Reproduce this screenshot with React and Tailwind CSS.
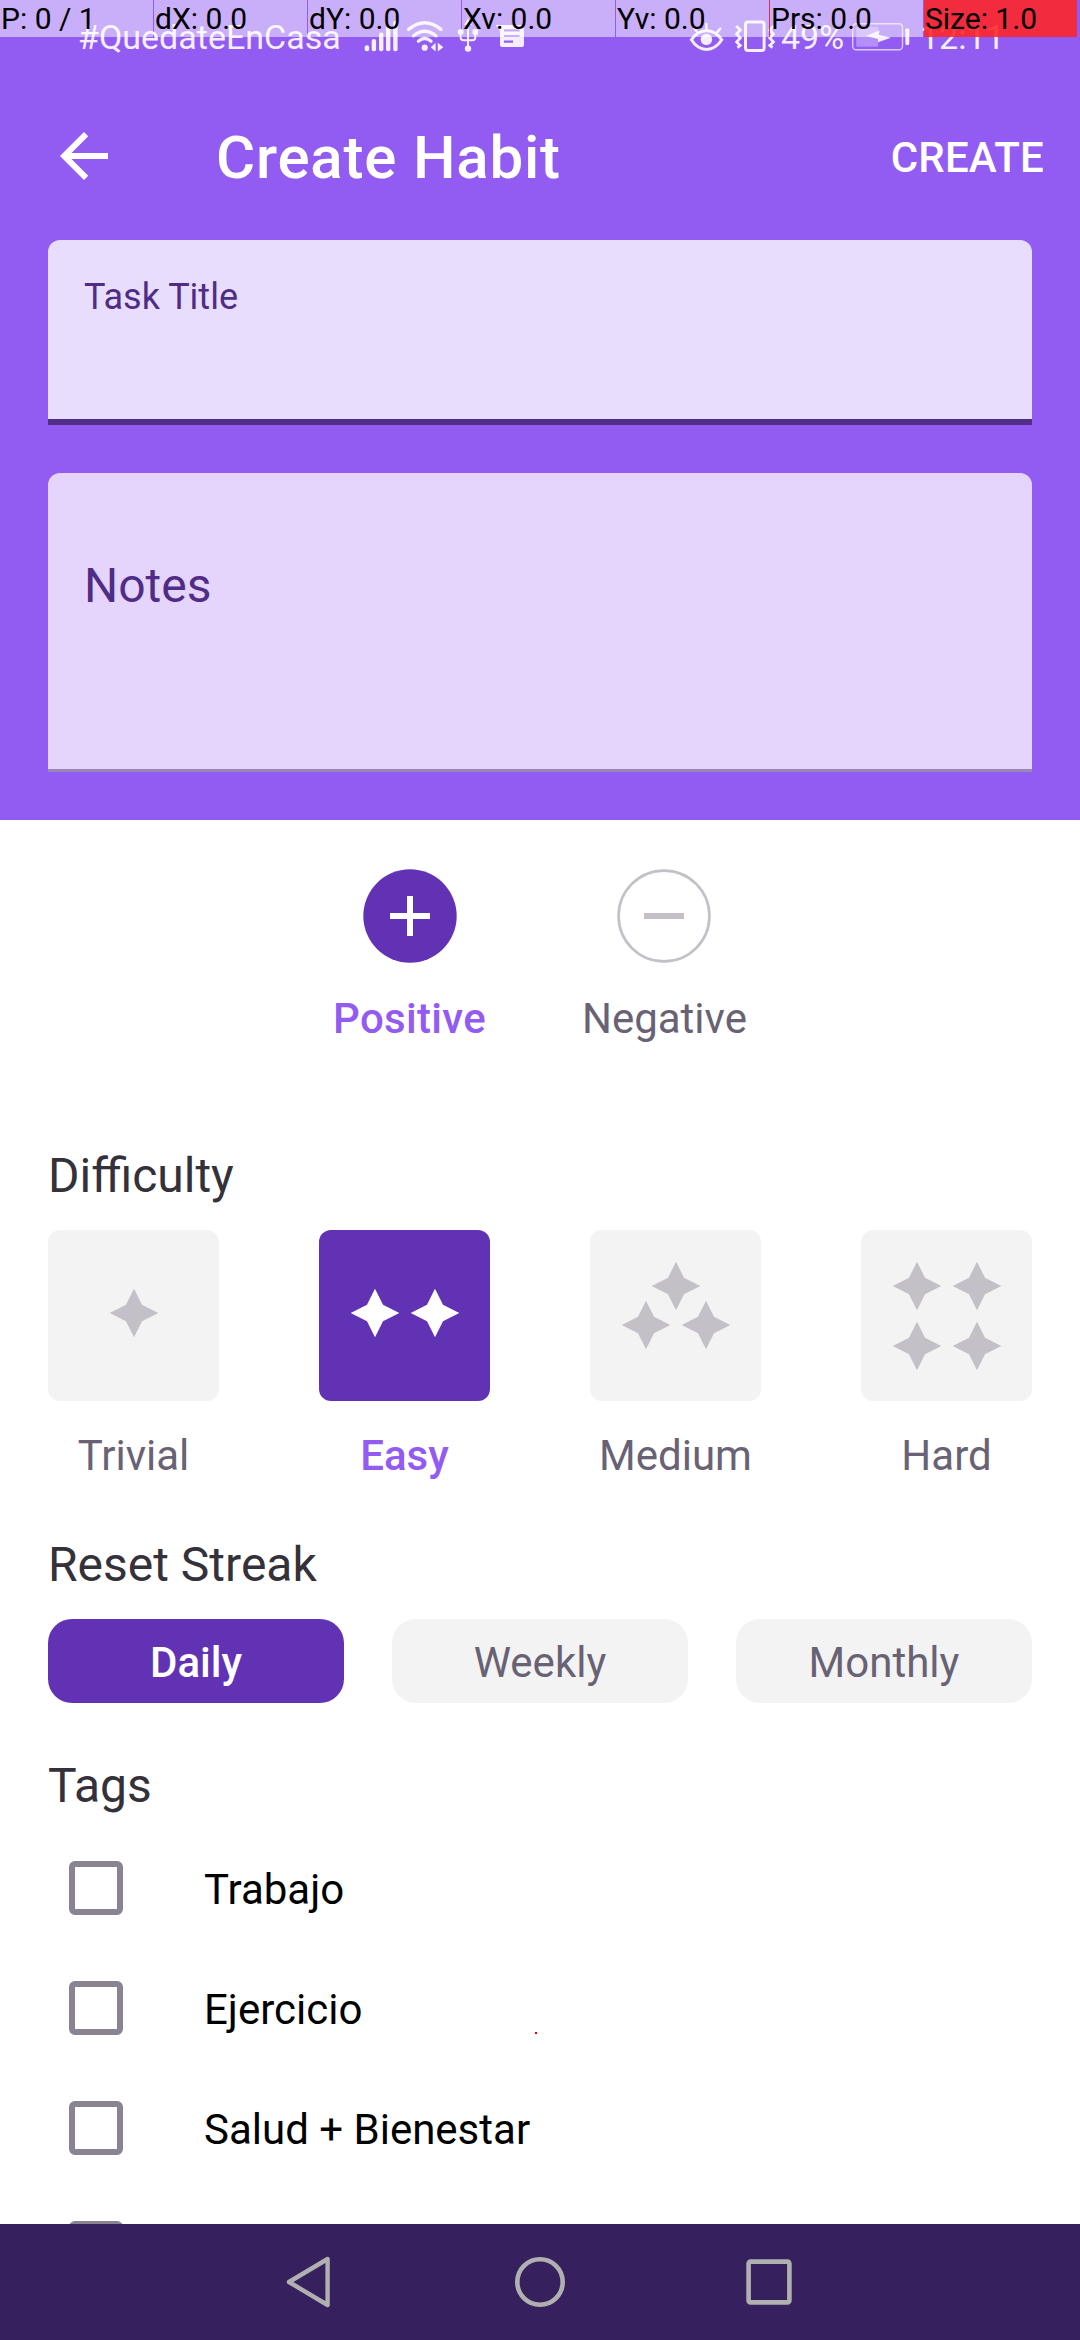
import { MdArrowBack } from "react-icons/md";

const DEBUG_CELLS = [
  { text: "P: 0 / 1", style: "bg-white/50" },
  { text: "dX: 0.0", style: "bg-white/50" },
  { text: "dY: 0.0", style: "bg-white/50" },
  { text: "Xv: 0.0", style: "bg-white/50" },
  { text: "Yv: 0.0", style: "bg-white/50" },
  { text: "Prs: 0.0", style: "bg-white/50 shadow-[-1px_0_0_#d8305a]" },
  { text: "Size: 1.0", style: "bg-[rgba(255,36,36,0.88)]" },
];

const DIFFICULTIES = [
  { label: "Trivial", stars: [[86, 83]] },
  { label: "Easy", stars: [[56, 83], [116, 83]], selected: true },
  { label: "Medium", stars: [[86, 56], [56, 95], [116, 95]] },
  { label: "Hard", stars: [[56, 56], [116, 56], [56, 116], [116, 116]] },
];

const STREAKS = [
  { label: "Daily", selected: true },
  { label: "Weekly" },
  { label: "Monthly" },
];

const TAGS = ["Trabajo", "Ejercicio", "Salud + Bienestar", ""];

function PointerDebugBar() {
  return (
    <div className="absolute inset-x-0 top-0 flex h-[37px] gap-px text-[30px] leading-[37px] text-black">
      {DEBUG_CELLS.map((c) => (
        <div key={c.text} className={`w-[153px] shrink-0 whitespace-nowrap pl-px ${c.style}`}>
          {c.text}
        </div>
      ))}
    </div>
  );
}

function SignalIcon() {
  return (
    <svg className="h-[60px] w-9 shrink-0" viewBox="364 8 36 60" fill="currentColor">
      <rect x="364.7" y="45.3" width="4.4" height="6" rx="2" />
      <rect x="371.7" y="39" width="4.4" height="12.3" rx="2" />
      <rect x="379" y="32.4" width="4.4" height="18.9" rx="2" />
      <rect x="386" y="26.4" width="4.4" height="24.9" rx="2" />
      <rect x="393.2" y="20.7" width="4.4" height="30.6" rx="2" />
    </svg>
  );
}

function WifiIcon() {
  return (
    <svg className="ml-1.5 h-[60px] w-10 shrink-0" viewBox="406 8 40 60" fill="none" stroke="currentColor" strokeWidth="3.4" strokeLinecap="round">
      <path d="M408.6 29.4Q424.7 16 441 29.4" />
      <path d="M413.6 35.8Q424.7 26.6 435.8 35.8" />
      <path d="M418.4 41.2Q424.7 36 431 41.2" />
      <circle cx="424.7" cy="47.7" r="3.1" fill="currentColor" stroke="none" />
      <path d="M430.8 47.2L435.6 42.8V51.4Z M443.4 47.2L437.8 42.8V51.4Z" fill="currentColor" stroke="none" />
    </svg>
  );
}

function UsbIcon() {
  return (
    <svg className="ml-2.5 h-[60px] w-6 shrink-0" viewBox="456 8 24 60" fill="currentColor">
      <path d="M460.7 33V37.5Q460.7 40.3 463.5 40.3H472.5Q475.3 40.3 475.3 37.5V33M468 23V47" fill="none" stroke="currentColor" strokeWidth="2" />
      <path d="M468 18.5L472 25H464Z" />
      <circle cx="460.7" cy="32" r="3" />
      <rect x="472.6" y="29.2" width="5.6" height="5.6" rx="1" />
      <circle cx="468" cy="48.6" r="3.2" />
    </svg>
  );
}

function MessageIcon() {
  return (
    <svg className="ml-3.5 h-[60px] w-8 shrink-0" viewBox="494 8 32 60">
      <path d="M495.7 25H522Q524 25 524 27V45Q524 47 522 47H502Q500 47 500 45V31Z" fill="currentColor" />
      <path d="M504 30.4H519.6M504 36H519.6M504 41.6H513" stroke="#925cf3" strokeWidth="2.2" />
    </svg>
  );
}

function EyeIcon() {
  return (
    <svg className="ml-auto h-[60px] w-[38px] shrink-0" viewBox="688 8 38 60" fill="none" stroke="currentColor" strokeWidth="3" strokeLinecap="round">
      <path d="M691.4 39.8Q697.5 30.8 706.5 30.8T721.8 39.8Q715.5 49.4 706.5 49.4T691.4 39.8Z" />
      <circle cx="706.4" cy="39.4" r="5.7" fill="currentColor" stroke="none" />
      <path d="M706.4 24V30M694.5 28.6L697.2 32.4M720.3 28.6L717 32.4" strokeWidth="2.4" />
    </svg>
  );
}

function VibrateIcon() {
  return (
    <svg className="ml-2 h-[60px] w-[42px] shrink-0" viewBox="734 8 42 60" fill="none" stroke="currentColor" strokeWidth="3">
      <rect x="745.5" y="22" width="18.6" height="28.4" rx="2.5" />
      <path d="M736.2 26L740.3 30L736.6 34L740.3 38L736.6 42L740.2 45.4L737.4 47.6M773.8 26L769.8 30L773.4 34L769.8 38L773.4 42L769.8 45.4L772.6 47.6" strokeWidth="2.8" />
    </svg>
  );
}

function BatteryIcon() {
  return (
    <svg className="h-[60px] w-[60px] shrink-0" viewBox="851 8 60 60" fill="currentColor">
      <rect x="852.7" y="23.7" width="49.8" height="26" rx="3.5" fill="none" stroke="currentColor" strokeWidth="1.4" opacity=".75" />
      <rect x="856.2" y="26.7" width="22" height="20" rx="1" opacity=".35" />
      <path d="M865.7 36L879.5 30.5L878.8 34.8L891 37.7L878 42.2V39Z" />
      <rect x="905.3" y="28.3" width="4" height="17" rx="2" />
    </svg>
  );
}

function StatusBar() {
  return (
    <div className="flex h-[76px] items-center pr-[75px] pl-[78px] text-[34px] leading-[74px] text-[#f4eefe]">
      <span className="mb-0.5 w-[286px] shrink-0 whitespace-nowrap">#QuedateEnCasa</span>
      <SignalIcon />
      <WifiIcon />
      <UsbIcon />
      <MessageIcon />
      <EyeIcon />
      <VibrateIcon />
      <span className="mb-0.5 ml-[5px] w-[70px] shrink-0">49%</span>
      <BatteryIcon />
      <span className="mb-0.5 ml-[9px] w-[85px] shrink-0">12:11</span>
    </div>
  );
}

function AppBar() {
  return (
    <div className="flex h-[164px] items-center pr-9 pl-12 font-medium text-white">
      <MdArrowBack className="mb-1 size-[72px]" />
      <h1 className="ml-24 text-[60px] leading-[72px] font-medium tracking-[0.8px]">Create Habit</h1>
      <button className="ml-auto text-[42px] leading-[60px] tracking-[0.2px]">CREATE</button>
    </div>
  );
}

function SectionTitle({ children, className }) {
  return <h2 className={`text-[48px] leading-[56px] text-[#34313a] ${className}`}>{children}</h2>;
}

function ControlChoice({ label, selected }) {
  return (
    <div className="flex flex-col items-center">
      <svg className="size-[94px]" viewBox="0 0 94 94">
        {selected ? (
          <>
            <circle cx="47" cy="47" r="46.7" fill="#6133b4" />
            <path d="M27 47H67M47 27V67" stroke="#fff" strokeWidth="6" />
          </>
        ) : (
          <>
            <circle cx="47" cy="47" r="45.4" fill="none" stroke="#c3c0c7" strokeWidth="2.7" />
            <path d="M27 47H67" stroke="#c3c0c7" strokeWidth="6" />
          </>
        )}
      </svg>
      <span
        className={`mt-8 text-[42px] leading-[48px] ${
          selected ? "font-medium tracking-[0.3px] text-[#925cf3]" : "text-[#686274]"
        }`}
      >
        {label}
      </span>
    </div>
  );
}

function DifficultyTile({ label, stars, selected }) {
  return (
    <div className="flex w-[171px] flex-col items-center">
      <div className={`size-[171px] rounded-xl ${selected ? "bg-[#6133b4] text-white" : "bg-[#f3f3f3] text-[#c3c0c7]"}`}>
        <svg className="size-full" viewBox="0 0 171 171" fill="currentColor">
          {stars.map(([x, y]) => (
            <path key={`${x}-${y}`} transform={`translate(${x} ${y})`} d="M0-24.3L8-8.2L24.3 0L8 8.2L0 24.3L-8 8.2L-24.3 0L-8-8.2Z" />
          ))}
        </svg>
      </div>
      <span className={`mt-[31px] text-[42px] leading-[48px] ${selected ? "font-medium text-[#925cf3]" : "text-[#686274]"}`}>
        {label}
      </span>
    </div>
  );
}

function NavigationBar() {
  return (
    <nav className="flex h-[116px] shrink-0 items-center justify-between bg-[#36205d] px-[285px] text-[#b1b0b0]">
      <svg className="h-[52px] w-[47px]" viewBox="0 0 47 52" fill="none" stroke="currentColor" strokeWidth="4.4" strokeLinejoin="round">
        <path d="M4 26L42.6 3V49Z" />
      </svg>
      <svg className="ml-[3px] size-[52px]" viewBox="0 0 52 52" fill="none" stroke="currentColor" strokeWidth="4.6">
        <circle cx="26" cy="26" r="22.7" />
      </svg>
      <svg className="size-[50px]" viewBox="0 0 50 50" fill="none" stroke="currentColor" strokeWidth="4.6">
        <rect x="3.6" y="4.6" width="40.8" height="40.8" rx="2" />
      </svg>
    </nav>
  );
}

export default function App() {
  return (
    <div className="relative flex h-[2340px] w-[1080px] flex-col overflow-hidden bg-white font-['Roboto',sans-serif]">
      <header className="h-[820px] shrink-0 bg-[#925cf3]">
        <StatusBar />
        <AppBar />
        <div className="flex flex-col gap-12 px-12 text-[#4f2d86]">
          <div className="h-[185px] rounded-t-xl border-b-6 border-[#4f2f87] bg-[#e9ddfe] px-9 pt-[39px] text-[36px] leading-9">
            Task Title
          </div>
          <div className="h-[299px] rounded-t-xl border-b-3 border-[#9986b3] bg-[#e5d5fd] px-9 pt-[89px] text-[48px] leading-[48px]">
            Notes
          </div>
        </div>
      </header>

      <main className="min-h-0 flex-1 overflow-hidden px-12">
        <div className="mt-[49px] flex justify-center gap-24">
          <ControlChoice label="Positive" selected />
          <ControlChoice label="Negative" />
        </div>

        <SectionTitle className="mt-[105px]">Difficulty</SectionTitle>
        <div className="mt-[26px] flex justify-between">
          {DIFFICULTIES.map((d) => (
            <DifficultyTile key={d.label} {...d} />
          ))}
        </div>

        <SectionTitle className="mt-[57px]">Reset Streak</SectionTitle>
        <div className="mt-[26px] grid grid-cols-3 gap-12">
          {STREAKS.map((s) => (
            <button
              key={s.label}
              className={`h-[84px] rounded-3xl pt-[3px] text-[42px] leading-[48px] ${
                s.selected ? "bg-[#6133b4] font-medium text-white" : "bg-[#f3f3f3] text-[#686274]"
              }`}
            >
              {s.label}
            </button>
          ))}
        </div>

        <SectionTitle className="mt-[55px]">Tags</SectionTitle>
        <ul className="mt-3.5">
          {TAGS.map((tag, i) => (
            <li key={i} className="flex h-[120px] items-center pl-[21px]">
              <span className="size-[54px] shrink-0 rounded-md border-6 border-[#8a8391]" />
              <span className="ml-[81px] pt-[3px] text-[42px] leading-[48px] text-black">{tag}</span>
            </li>
          ))}
        </ul>
      </main>

      <NavigationBar />
      <PointerDebugBar />
      {/* last touch position of the pointer overlay */}
      <span className="absolute top-[2032px] left-[535px] size-0.5 bg-[#ff0000]" />
    </div>
  );
}
